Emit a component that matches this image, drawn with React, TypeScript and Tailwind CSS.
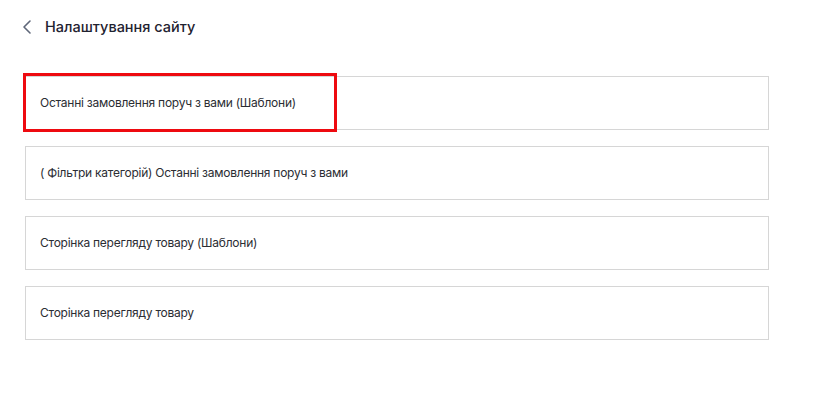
import { ChevronLeft } from 'lucide-react'

const items = [
    'Останні замовлення поруч з вами (Шаблони)',
    '( Фільтри категорій) Останні замовлення поруч з вами',
    'Сторінка перегляду товару (Шаблони)',
    'Сторінка перегляду товару',
]

export default function App() {
    return (
        <div className="w-[820px] h-[406px] bg-white font-['Inter',sans-serif] text-[#2b2d33]">
            {/* Header */}
            <div className="flex items-center pl-[15px] pt-[15px]">
                <ChevronLeft className="h-6 w-6 text-[#5f6779]" strokeWidth={1.6} />
                <h1 className="ml-[6px] text-[14.5px] font-medium text-[#1f2230] leading-none">Налаштування сайту</h1>
            </div>

            {/* Settings list */}
            <div className="flex flex-col gap-[15.7px] pl-[25px] pt-[37px] w-[744px] box-content">
                {items.map((label, idx) => (
                    <div
                        key={idx}
                        className="relative h-[54.3px] border border-[#d6d6d6] flex items-center pl-[14px] text-[12px] tracking-[-0.25px]"
                    >
                        {label}
                        {idx === 0 && (
                            <div className="absolute -left-[3px] -top-[4px] w-[314px] h-[59px] border-[3px] border-[#ee0a10] pointer-events-none" />
                        )}
                    </div>
                ))}
            </div>
        </div>
    )
}
